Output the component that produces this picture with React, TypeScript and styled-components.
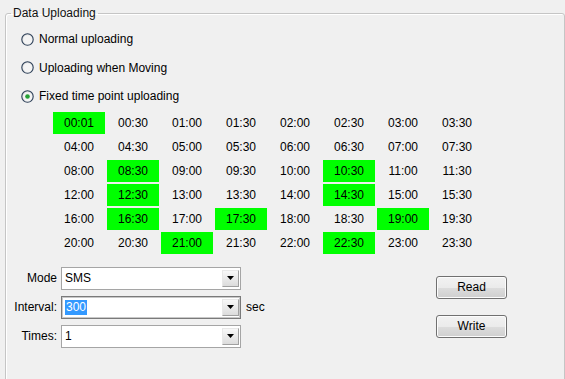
import { createGlobalStyle } from "styled-components";
import styled from "styled-components";

const Global = createGlobalStyle`
  html, body {
    margin: 0;
    padding: 0;
    background: #f0f0f0;
    overflow: hidden;
  }
  body {
    font-family: "Liberation Sans", Arial, sans-serif;
    font-size: 12px;
    color: #000;
  }
`;

const Page = styled.div`
  width: 565px;
  height: 379px;
  overflow: hidden;
  padding: 6px 0 0 5px;
  box-sizing: border-box;
`;

const Group = styled.fieldset`
  margin: 0;
  padding: 0;
  width: 560px;
  height: 420px;
  box-sizing: border-box;
  border: 1px solid #c5c5c5;
  border-radius: 3px;
  box-shadow: inset 1px 1px 0 #fff;
`;

const Title = styled.legend`
  margin-left: 5px;
  padding: 0 2px;
  line-height: 14px;
  color: #111;
`;

const Options = styled.div`
  display: flex;
  flex-direction: column;
  gap: 8px;
  margin: 9px 0 0 15px;
`;

const RadioRow = styled.label`
  display: flex;
  align-items: center;
  gap: 5px;
  height: 20.5px;
`;

const Grid = styled.div`
  display: grid;
  grid-template-columns: repeat(8, 52px);
  grid-auto-rows: 22px;
  gap: 2px;
  margin: 5px 0 0 47px;
`;

const Cell = styled.div<{ $on: boolean }>`
  display: flex;
  align-items: center;
  justify-content: center;
  background: ${(p) => (p.$on ? "#00ff00" : "transparent")};
`;

const Bottom = styled.div`
  display: flex;
  align-items: flex-start;
  margin-top: 13px;
`;

const Form = styled.div`
  display: flex;
  flex-direction: column;
  gap: 6px;
  width: 259px;
`;

const FormRow = styled.div`
  display: flex;
  align-items: center;
  height: 23px;
`;

const Label = styled.span`
  width: 51px;
  text-align: right;
  margin-right: 4px;
`;

const Combo = styled.div<{ $focus?: boolean }>`
  position: relative;
  width: 180px;
  height: 23px;
  box-sizing: border-box;
  display: flex;
  align-items: center;
  background: #fff;
  border: 1px solid ${(p) => (p.$focus ? "#7a7a7a" : "#a5a5a5")};
  box-shadow: ${(p) => (p.$focus ? "inset 0 0 0 1px #c8c8c8" : "none")};
  padding-left: 3px;
`;

const Selected = styled.span`
  background: #3399ff;
  color: #fff;
  padding: 0 1px;
  line-height: 15px;
`;

const DropButton = styled.div`
  position: absolute;
  right: 1px;
  top: 2px;
  bottom: 2px;
  width: 17px;
  box-sizing: border-box;
  border: 1px solid #a0a0a0;
  border-top-color: #e8e8e8;
  border-left-color: #e8e8e8;
  background: linear-gradient(#f8f8f8, #dcdcdc);
  display: flex;
  align-items: center;
  justify-content: center;
`;

const Unit = styled.span`
  margin-left: 5px;
`;

const Buttons = styled.div`
  display: flex;
  flex-direction: column;
  gap: 16px;
  margin: 9px 0 0 171px;
`;

const Button = styled.button`
  width: 71px;
  height: 23px;
  padding: 0;
  font-family: "Liberation Sans", Arial, sans-serif;
  font-size: 12px;
  color: #000;
  border: 1px solid #707070;
  border-radius: 3px;
  background: linear-gradient(#f2f2f2 0%, #ebebeb 50%, #dddddd 51%, #cfcfcf 100%);
  box-shadow: inset 0 0 0 1px #fcfcfc;
`;

const Radio = ({ checked }: { checked?: boolean }) => (
  <svg width="13" height="13" viewBox="0 0 13 13">
    <defs>
      <linearGradient id="rg" x1="0" y1="0" x2="1" y2="1">
        <stop offset="0" stopColor="#d8d8d8" />
        <stop offset="1" stopColor="#ffffff" />
      </linearGradient>
    </defs>
    <circle cx="6.5" cy="6.5" r="5.7" fill="url(#rg)" stroke="#2c3f57" strokeWidth="1.1" />
    <circle cx="6.5" cy="6.5" r="4.2" fill="#f4f4f4" />
    {checked && <circle cx="6.5" cy="6.5" r="2.3" fill="#25a035" />}
  </svg>
);

const Arrow = () => (
  <svg width="7" height="4" viewBox="0 0 7 4">
    <path d="M0 0H7L3.5 4Z" fill="#000" />
  </svg>
);

const highlighted = ["00:01", "08:30", "10:30", "12:30", "14:30", "16:30", "17:30", "19:00", "21:00", "22:30"];

const times = Array.from({ length: 48 }, (_, i) => {
  if (i === 0) return "00:01";
  const h = String(Math.floor(i / 2)).padStart(2, "0");
  return `${h}:${i % 2 ? "30" : "00"}`;
});

export default function App() {
  return (
    <Page>
      <Global />
      <Group>
        <Title>Data Uploading</Title>
        <Options>
          <RadioRow><Radio />Normal uploading</RadioRow>
          <RadioRow><Radio />Uploading when Moving</RadioRow>
          <RadioRow><Radio checked />Fixed time point uploading</RadioRow>
        </Options>
        <Grid>
          {times.map((t) => (
            <Cell key={t} $on={highlighted.includes(t)}>{t}</Cell>
          ))}
        </Grid>
        <Bottom>
          <Form>
            <FormRow>
              <Label>Mode</Label>
              <Combo>SMS<DropButton><Arrow /></DropButton></Combo>
            </FormRow>
            <FormRow>
              <Label>Interval:</Label>
              <Combo $focus><Selected>300</Selected><DropButton><Arrow /></DropButton></Combo>
              <Unit>sec</Unit>
            </FormRow>
            <FormRow>
              <Label>Times:</Label>
              <Combo>1<DropButton><Arrow /></DropButton></Combo>
            </FormRow>
          </Form>
          <Buttons>
            <Button>Read</Button>
            <Button>Write</Button>
          </Buttons>
        </Bottom>
      </Group>
    </Page>
  );
}
